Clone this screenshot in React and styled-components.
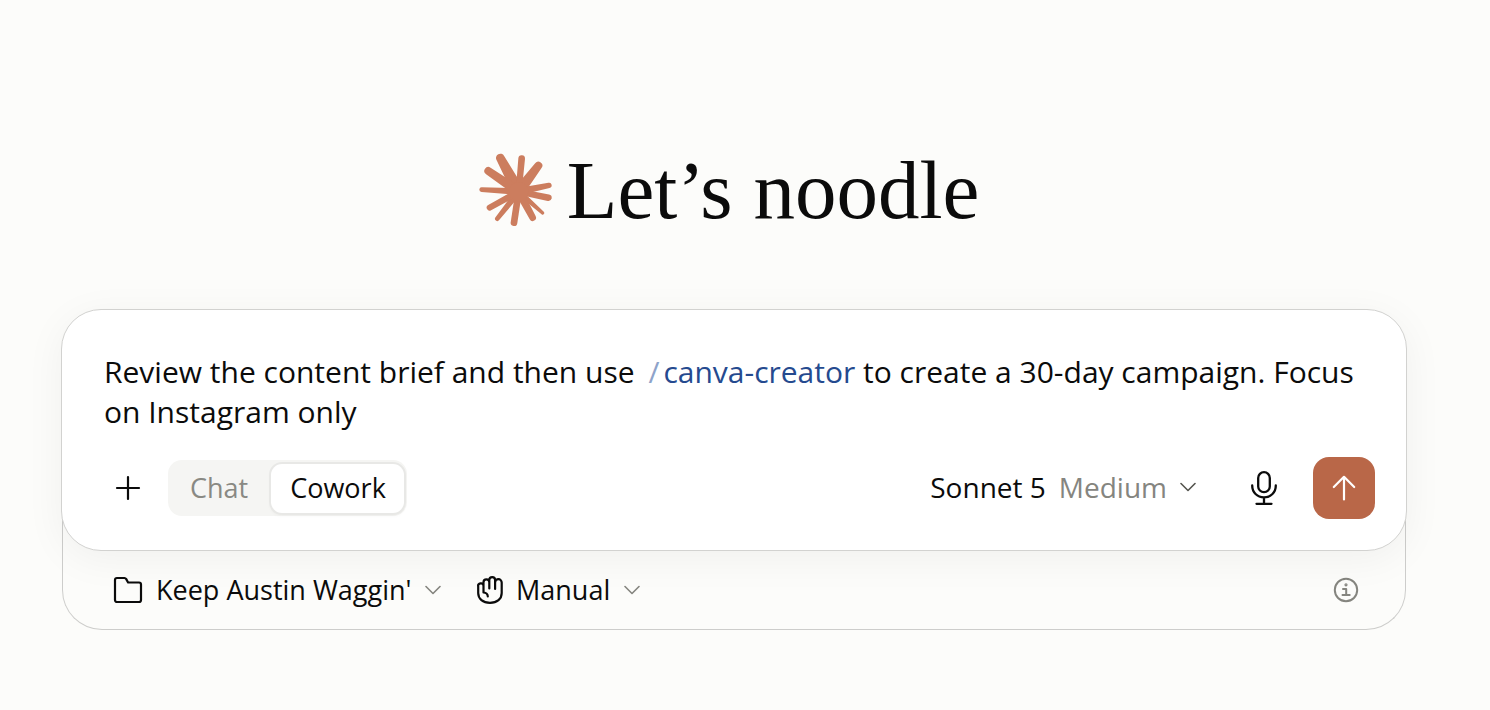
import React from "react";
import styled, { createGlobalStyle } from "styled-components";

const GlobalStyle = createGlobalStyle`
  *, *::before, *::after { box-sizing: border-box; }
  body {
    margin: 0;
    background: #fcfcfa;
    color: #0b0b0b;
    font-family: "Open Sans", "Noto Sans", sans-serif;
  }
  button, select { font: inherit; color: inherit; margin: 0; }
`;

const Page = styled.main`
  padding: 140px 83px 80px 61px;
`;

const Greeting = styled.header`
  display: flex;
  align-items: center;
  justify-content: center;
  gap: 14px;
  height: 100px;
  padding-right: 10px;
`;

const Title = styled.h1`
  margin: 0;
  font-family: "Liberation Serif", serif;
  font-size: 83px;
  line-height: 100px;
  font-weight: 400;
`;

const Composer = styled.form`
  margin-top: 69px;
`;

const Card = styled.section`
  position: relative;
  z-index: 1;
  padding: 42px 31px 31px 42px;
  background: #fff;
  border: 1px solid #d2d2d0;
  border-radius: 40px;
  box-shadow: 0 8px 40px rgba(0, 0, 0, 0.05);
`;

const Prompt = styled.div`
  font-size: 30px;
  line-height: 40px;
  outline: none;
`;

const Slash = styled.span`
  margin: 0 4px 0 6px;
  color: #8ea3ca;
`;

const Skill = styled.span`
  color: #254a8f;
`;

const Toolbar = styled.div`
  display: flex;
  align-items: center;
  margin-top: 25px;
`;

const IconButton = styled.button`
  display: flex;
  align-items: center;
  justify-content: center;
  width: ${(p) => p.$size}px;
  height: ${(p) => p.$size}px;
  padding: 0;
  border: 0;
  border-radius: 16px;
  background: ${(p) => (p.$filled ? "#b96748" : "transparent")};
  color: ${(p) => p.$color || "#0b0b0b"};
`;

const Segments = styled.div`
  display: flex;
  gap: 5px;
  margin-left: 16px;
  padding: 4px 3px 3px;
  height: 56px;
  border-radius: 14px;
  background: #f5f5f3;
  font-size: 27px;
`;

const Segment = styled.button`
  padding: 0 18px 2px 19px;
  border: 0;
  border-radius: 11px;
  background: ${(p) => (p.$active ? "#fff" : "transparent")};
  color: ${(p) => (p.$active ? "#0b0b0b" : "#898983")};
  box-shadow: ${(p) => (p.$active ? "0 0 0 2px #e8e8e6, 0 2px 4px rgba(0, 0, 0, 0.06)" : "none")};
`;

const ModelButton = styled.button`
  display: flex;
  align-items: center;
  gap: 13px;
  margin-left: auto;
  margin-right: 37px;
  padding: 0 0 2px;
  border: 0;
  background: transparent;
  font-size: 28px;
  line-height: 40px;
`;

const Effort = styled.span`
  color: #85857f;
`;

const Actions = styled.div`
  display: flex;
  gap: 18px;
`;

const Tray = styled.section`
  display: flex;
  align-items: center;
  justify-content: space-between;
  margin: -50px 1px 0;
  padding: 50px 35px 0 50px;
  height: 129px;
  border: 1px solid #cdcdcb;
  border-top: 0;
  border-radius: 0 0 40px 40px;
  font-size: 27px;
  line-height: 36px;
`;

const Pickers = styled.div`
  display: flex;
  gap: 36px;
`;

const Picker = styled.label`
  display: flex;
  align-items: center;
  gap: 13px;
`;

const PickerSelect = styled.select`
  appearance: none;
  padding: 0;
  border: 0;
  background: transparent;
  outline: none;
`;

const RAYS = [
  [93, 54, 13, 19], [157, 56, 10, 9], [207, 77, 12, 17], [239, 136, 8, 11],
  [237, 173, 10, 9], [220, 219, 5, 9], [190, 233, 10, 12], [134, 248, 10, 10],
  [84, 236, 7, 10], [61, 203, 9, 10], [37, 149, 7, 10], [57, 93, 12, 15],
];

function rayPath([x, y, tip, base]) {
  const cx = 148;
  const cy = 155;
  const length = Math.hypot(x - cx, y - cy);
  const nx = -(y - cy) / length;
  const ny = (x - cx) / length;
  return `M${cx + nx * base} ${cy + ny * base}L${x + nx * tip} ${y + ny * tip}A${tip} ${tip} 0 0 0 ${x - nx * tip} ${y - ny * tip}L${cx - nx * base} ${cy - ny * base}Z`;
}

function Burst() {
  return (
    <svg width="74" height="74" viewBox="29 39 222 222" fill="#cc7d5e" aria-hidden="true">
      {RAYS.map((ray) => <path key={ray[0]} d={rayPath(ray)} />)}
      <circle cx="148" cy="155" r="29" />
    </svg>
  );
}

function Icon({ width, height = width, stroke = 2, color = "currentColor", children }) {
  return (
    <svg width={width} height={height} viewBox={`0 0 ${width} ${height}`} fill="none" stroke={color}
      strokeWidth={stroke} strokeLinecap="round" strokeLinejoin="round" aria-hidden="true">
      {children}
    </svg>
  );
}

const Chevron = ({ color }) => (
  <Icon width={16} height={10} stroke={1.6} color={color}><path d="M1 1.5l7 7 7-7" /></Icon>
);

export default function App() {
  return (
    <>
      <GlobalStyle />
      <Page>
        <Greeting>
          <Burst />
          <Title>Let’s noodle</Title>
        </Greeting>
        <Composer onSubmit={(e) => e.preventDefault()}>
          <Card>
            <Prompt role="textbox" aria-label="Prompt" aria-multiline="true" contentEditable suppressContentEditableWarning spellCheck={false}>
              Review the content brief and then use <Slash>/</Slash><Skill>canva-creator</Skill>
              {" to create a 30-day campaign. Focus "}
              {"on Instagram only"}
            </Prompt>
            <Toolbar>
              <IconButton type="button" $size={48} aria-label="Add">
                <Icon width={26} stroke={2.2}><path d="M13 2v22M2 13h22" /></Icon>
              </IconButton>
              <Segments>
                <Segment type="button" aria-pressed="false">Chat</Segment>
                <Segment type="button" aria-pressed="true" $active>Cowork</Segment>
              </Segments>
              <ModelButton type="button" aria-haspopup="menu">
                <span>Sonnet 5</span>
                <Effort>Medium</Effort>
                <Chevron color="#55554f" />
              </ModelButton>
              <Actions>
                <IconButton type="button" $size={62} aria-label="Dictate">
                  <Icon width={26} height={34} stroke={2.3}>
                    <rect x="7.2" y="1.2" width="11.6" height="20" rx="5.8" />
                    <path d="M1.2 14.5c0 7 5 11.8 11.8 11.8s11.8-4.8 11.8-11.8M13 26.3V32.8M5.5 32.8h15" />
                  </Icon>
                </IconButton>
                <IconButton type="submit" $size={62} $filled $color="#fff" aria-label="Send">
                  <Icon width={26} stroke={2.2}><path d="M13 24.5V1.8M2.8 12l10.2-10.2 10.2 10.2" /></Icon>
                </IconButton>
              </Actions>
            </Toolbar>
          </Card>
          <Tray>
            <Pickers>
              <Picker>
                <Icon width={30} height={28} stroke={2.2}>
                  <path d="M2 4a2 2 0 0 1 2-2h7.5a2 2 0 0 1 1.6.9l2 3.6H26a2 2 0 0 1 2 2V24a2 2 0 0 1-2 2H4a2 2 0 0 1-2-2z" />
                </Icon>
                <PickerSelect aria-label="Project"><option>Keep Austin Waggin'</option></PickerSelect>
                <Chevron color="#85857f" />
              </Picker>
              <Picker>
                <Icon width={26} height={28} stroke={2.2}>
                  <path d="M6.5 16.5V6.2a2.9 2.9 0 0 1 5.8 0V12.5M12.3 11V4a2.9 2.9 0 0 1 5.8 0V13M18.1 6.5a3.3 3.3 0 0 1 6.6 0V17c0 6-4.6 9.8-11.7 9.8S1.2 23 1.2 17v-6.500a2.65 2.65 0 0 1 5.3-1M6.5 16.5c2.8.2 4.2 1 4.3 4" />
                </Icon>
                <PickerSelect aria-label="Mode"><option>Manual</option></PickerSelect>
                <Chevron color="#85857f" />
              </Picker>
            </Pickers>
            <IconButton type="button" $size={48} $color="#85857f" aria-label="Information">
              <Icon width={26}>
                <circle cx="13" cy="13" r="11.2" />
                <path d="M10 12h3.200V18M9.5 18h7.200" />
                <circle cx="13" cy="7.8" r=".6" />
              </Icon>
            </IconButton>
          </Tray>
        </Composer>
      </Page>
    </>
  );
}
